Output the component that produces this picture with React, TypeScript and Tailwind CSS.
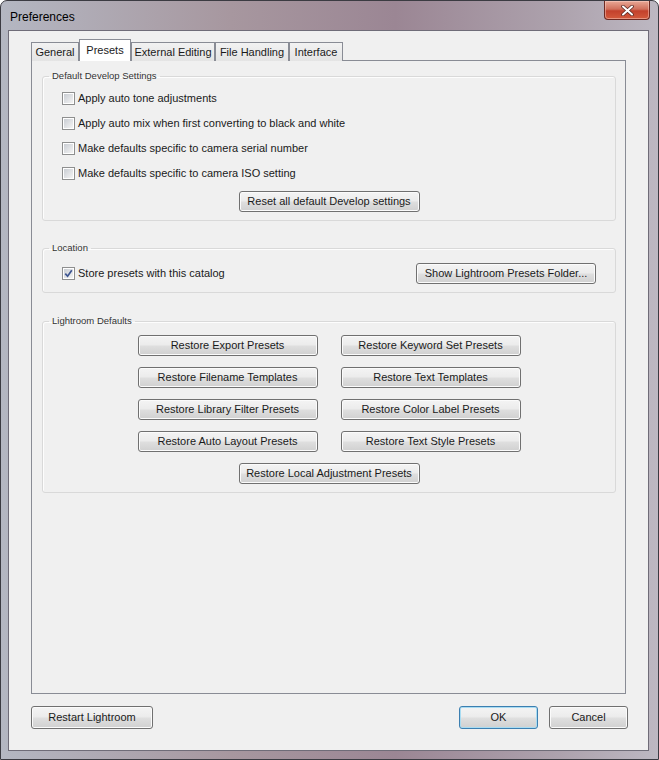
import type { ReactNode } from "react";

const TABS = [
  { label: "General", w: "w-[48px]" },
  { label: "Presets", w: "w-[52px]", active: true },
  { label: "External Editing", w: "w-[84px]" },
  { label: "File Handling", w: "w-[74px]" },
  { label: "Interface", w: "w-[54px]" },
];

const RESTORE = [
  "Restore Export Presets",
  "Restore Keyword Set Presets",
  "Restore Filename Templates",
  "Restore Text Templates",
  "Restore Library Filter Presets",
  "Restore Color Label Presets",
  "Restore Auto Layout Presets",
  "Restore Text Style Presets",
];

const btnBase =
  "flex items-center justify-center rounded-[3px] border text-[11px] text-[#1a1a1a] bg-[linear-gradient(#f4f4f4,#ececec_45%,#dedede_55%,#d0d0d0)]";

function Button({
  children,
  className = "",
  primary = false,
}: {
  children: ReactNode;
  className?: string;
  primary?: boolean;
}) {
  return (
    <button
      className={`${btnBase} ${
        primary
          ? "border-[#3c7fb1] shadow-[inset_0_0_0_1px_#a9dcf2]"
          : "border-[#707070] shadow-[inset_0_0_0_1px_#fbfbfb]"
      } ${className}`}
    >
      {children}
    </button>
  );
}

function Checkbox({ checked = false }: { checked?: boolean }) {
  return (
    <span className="flex h-[13px] w-[13px] shrink-0 border border-[#8e8f8f] bg-white p-px">
      <span className="flex h-full w-full items-center justify-center bg-[linear-gradient(135deg,#c9cdd3,#f4f4f4)]">
        {checked && (
          <svg width="9" height="9" viewBox="0 0 9 9">
            <path d="M1.3 4.6 L3.6 7.2 L7.8 1.2" fill="none" stroke="#3d5591" strokeWidth="1.7" />
          </svg>
        )}
      </span>
    </span>
  );
}

function CheckRow({ label, checked }: { label: string; checked?: boolean }) {
  return (
    <label className="flex h-[25px] items-center gap-[3px] text-[11px] text-[#1a1a1a]">
      <Checkbox checked={checked} />
      {label}
    </label>
  );
}

function Group({
  title,
  className = "",
  children,
}: {
  title: string;
  className?: string;
  children: ReactNode;
}) {
  return (
    <fieldset className={`ml-[10px] mr-[9px] rounded-[3px] border border-[#d9d9d9] shadow-[inset_1px_1px_0_#fdfdfd] ${className}`}>
      <legend className="ml-[6px] px-[3px] text-[9.5px] leading-[12px] text-[#333]">{title}</legend>
      {children}
    </fieldset>
  );
}

export default function App() {
  return (
    <div className="flex h-[760px] w-[659px] flex-col overflow-hidden rounded-t-[7px] border border-[#3b3b42] bg-[linear-gradient(90deg,#b4b7c2,#a7979f_35%,#9b8694_60%,#ada2ad_85%,#bdb8c2)] font-['Liberation_Sans',Arial,sans-serif]">
      {/* title bar */}
      <div className="flex h-[29px] shrink-0 items-start justify-between pl-[9px] pr-[8px]">
        <span className="pt-[7px] text-[12px] text-black">Preferences</span>
        <div className="flex h-[19px] w-[46px] items-center justify-center rounded-b-[4px] border border-t-0 border-[#6e2a22] bg-[linear-gradient(#e9a896,#d0705c_45%,#c3412c_55%,#d35a3c)] shadow-[inset_0_0_0_1px_rgba(255,220,210,0.45)]">
          <svg width="13" height="11" viewBox="0 0 13 11">
            <path d="M2 1.5 L11 9.5 M11 1.5 L2 9.5" stroke="#5a2a24" strokeWidth="3.6" strokeLinecap="round" />
            <path d="M2 1.5 L11 9.5 M11 1.5 L2 9.5" stroke="#ffffff" strokeWidth="2" strokeLinecap="round" />
          </svg>
        </div>
      </div>

      {/* client area */}
      <div className="mb-[8px] ml-[7px] mr-[9px] flex flex-1 flex-col border border-[#6f6c78] bg-[#f0f0f0] px-[22px] pb-[21px] pt-[9px]">
        {/* tabs */}
        <div className="relative z-10 -mb-px flex h-[21px] items-end">
          {TABS.map((t) => (
            <div
              key={t.label}
              className={`flex items-center justify-center border border-[#898c95] text-[11px] text-[#1a1a1a] ${t.w} ${
                t.active
                  ? "h-[22px] border-b-0 bg-white pb-[1px]"
                  : "h-[19px] border-b-0 bg-[linear-gradient(#f2f2f2,#e4e4e4)]"
              }`}
            >
              {t.label}
            </div>
          ))}
        </div>

        {/* tab panel */}
        <div className="flex flex-1 flex-col border border-[#898c95] bg-[#f0f0f0] pt-[9px]">
          <Group title="Default Develop Settings" className="pb-[8px]">
            <div className="flex flex-col pl-[19px] pt-[4px]">
              <CheckRow label="Apply auto tone adjustments" />
              <CheckRow label="Apply auto mix when first converting to black and white" />
              <CheckRow label="Make defaults specific to camera serial number" />
              <CheckRow label="Make defaults specific to camera ISO setting" />
            </div>
            <div className="mt-[5px] flex justify-center">
              <Button className="h-[21px] w-[181px]">Reset all default Develop settings</Button>
            </div>
          </Group>

          <Group title="Location" className="mt-[21px] pb-[6px]">
            <div className="flex items-center justify-between pl-[19px] pr-[19px] pt-[7px]">
              <CheckRow label="Store presets with this catalog" checked />
              <Button className="h-[21px] w-[180px]">Show Lightroom Presets Folder...</Button>
            </div>
          </Group>

          <Group title="Lightroom Defaults" className="mt-[22px] pb-[8px]">
            <div className="flex flex-col items-center gap-[11px] pt-[8px]">
              <div className="grid grid-cols-[180px_180px] gap-x-[23px] gap-y-[11px]">
                {RESTORE.map((r) => (
                  <Button key={r} className="h-[21px]">
                    {r}
                  </Button>
                ))}
              </div>
              <Button className="h-[21px] w-[181px]">Restore Local Adjustment Presets</Button>
            </div>
          </Group>
        </div>

        {/* footer */}
        <div className="-mr-[2px] mt-[12px] flex h-[23px] items-center">
          <Button className="h-[23px] w-[122px]">Restart Lightroom</Button>
          <div className="flex-1" />
          <Button primary className="h-[23px] w-[79px]">
            OK
          </Button>
          <Button className="ml-[11px] h-[23px] w-[79px]">Cancel</Button>
        </div>
      </div>
    </div>
  );
}
